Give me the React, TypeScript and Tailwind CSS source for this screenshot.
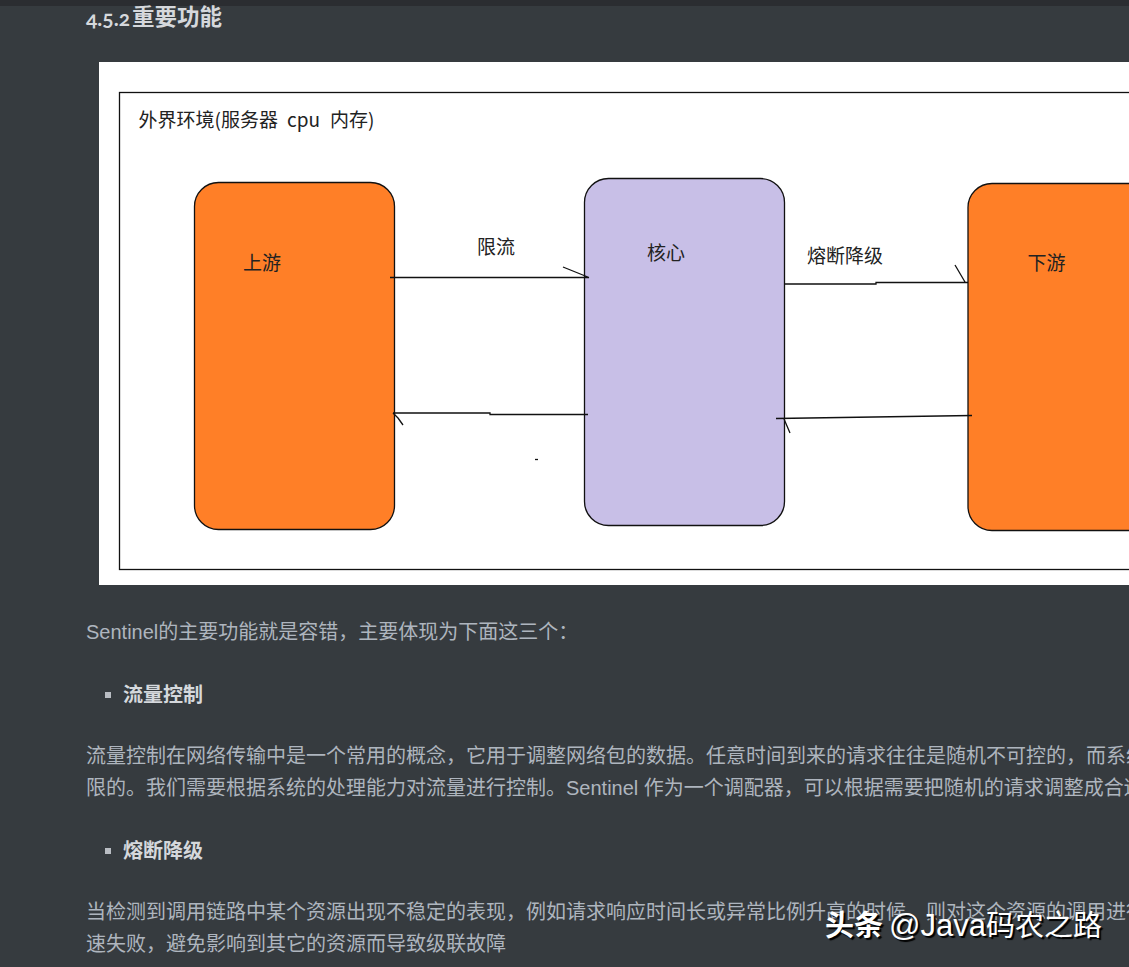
const cjk = { fontFamily: '"Liberation Sans", "Noto Sans CJK SC", sans-serif' }

function Diagram() {
  return (
    <svg viewBox="99 62 1030 523" className="block w-[1030px] h-[523px] bg-white">
      <g fill="none" stroke="#111" strokeWidth="1.3">
        <rect x="119.5" y="92.5" width="1100" height="477" />
        <rect x="194.5" y="182.5" width="200" height="347" rx="24" fill="#ff7f27" />
        <rect x="584.5" y="178.5" width="200" height="347" rx="24" fill="#c8bfe7" />
        <rect x="968" y="183.5" width="300" height="347" rx="24" fill="#ff7f27" />
        {/* arrows */}
        <path d="M390 277.5H589M563 267L589 277.5" />
        <path d="M785 284H876V282.5H968M955 265L965 282" />
        <path d="M393 413H490V414.5H588M393 413L398 418L403 425" />
        <path d="M776 418.5L972 415.5M784 419L790 433" />
        <path d="M535 459.5H538" />
      </g>
      <g fill="#222" style={{ fontFamily: '"Noto Sans CJK SC", sans-serif' }} fontSize="19">
        <text x="138.5" y="127">外界环境(服务器</text>
        <text x="287" y="127">cpu</text>
        <text x="330" y="127">内存)</text>
        <text x="243" y="270">上游</text>
        <text x="477" y="254">限流</text>
        <text x="647" y="260">核心</text>
        <text x="807" y="263">熔断降级</text>
        <text x="1027.5" y="270">下游</text>
      </g>
    </svg>
  )
}

export default function App() {
  return (
    <div className="relative h-[967px] w-[1129px] overflow-hidden bg-[#363b3f]" style={cjk}>
      <div className="h-[6px] bg-[#2b2d31]" />

      <h4 className="mt-[-1px] flex h-[25px] items-center whitespace-nowrap pl-[86px] text-[22.5px] font-bold text-[#d5d8dc]">
        <span className="mr-[2px] text-[21px] [font-variant-numeric:oldstyle-nums]" style={{ fontFamily: 'Lato, sans-serif' }}>4.5.2</span>
        重要功能
      </h4>

      <div className="mt-[32px] pl-[99px]">
        <Diagram />
      </div>

      <div className="pl-[86px] text-[20px] leading-[32px] text-[#aeb5be] whitespace-nowrap">
        <p className="mt-[31px]">Sentinel的主要功能就是容错，主要体现为下面这三个：</p>

        <div className="mt-[31px] flex items-center pl-[19px] font-bold text-[#d5d8dc]">
          <span className="mr-[12px] h-[6px] w-[6px] bg-[#b9bdc3]" />
          流量控制
        </div>

        <p className="mt-[29px]">流量控制在网络传输中是一个常用的概念，它用于调整网络包的数据。任意时间到来的请求往往是随机不可控的，而系统的处理能力是有</p>
        <p>限的。我们需要根据系统的处理能力对流量进行控制。Sentinel 作为一个调配器，可以根据需要把随机的请求调整成合适的形状</p>

        <div className="mt-[31px] flex items-center pl-[19px] font-bold text-[#d5d8dc]">
          <span className="mr-[12px] h-[6px] w-[6px] bg-[#b9bdc3]" />
          熔断降级
        </div>

        <p className="mt-[29px]">当检测到调用链路中某个资源出现不稳定的表现，例如请求响应时间长或异常比例升高的时候，则对这个资源的调用进行限制，让请求快</p>
        <p>速失败，避免影响到其它的资源而导致级联故障</p>
      </div>

      {/* watermark */}
      <div className="absolute left-[825px] top-[907px] flex items-baseline whitespace-nowrap text-[29px] leading-[38px] text-white [text-shadow:2px_2px_1px_#000]">
        <span className="mr-[6px] font-bold">头条</span>
        <span className="text-[31px]">@Java</span>
        <span>码农之路</span>
      </div>
    </div>
  )
}
